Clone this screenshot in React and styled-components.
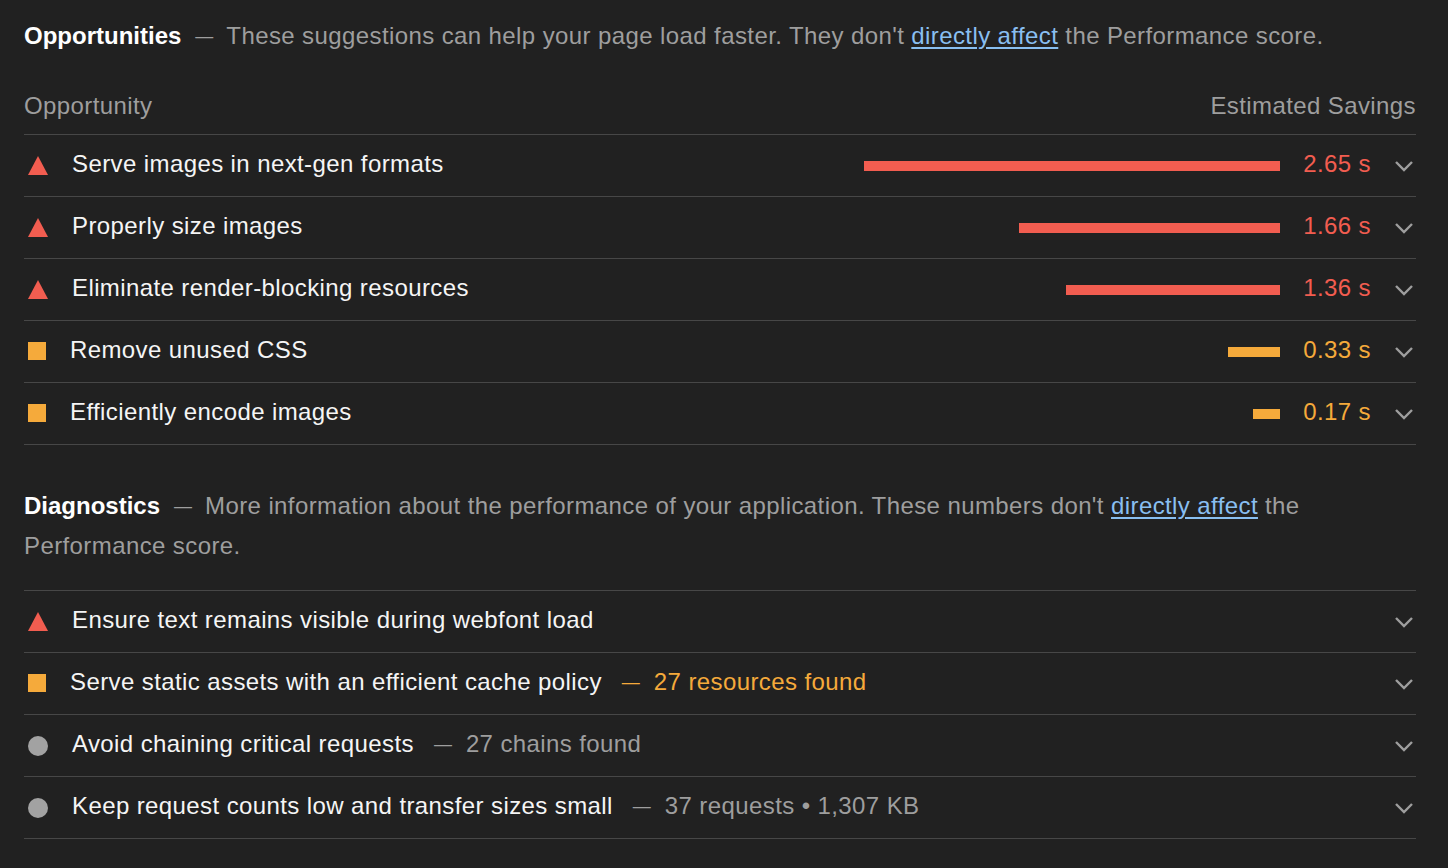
import React from "react";
import styled, { createGlobalStyle } from "styled-components";

const RED = "#f25d50";
const ORANGE = "#f5aa3b";
const GRAY = "#9e9e9e";
const LINE = "#474747";

const Global = createGlobalStyle`
  html, body { margin: 0; padding: 0; background: #212121; }
  body { font-family: "Liberation Sans", Arial, Helvetica, sans-serif; color: #f5f5f5; }
`;

const Page = styled.div`
  padding: 16px 32px 0 24px;
  font-size: 24px;
  letter-spacing: 0.4px;
`;

const Section = styled.section`
  & + & { margin-top: 41px; }
`;

const SectionHead = styled.div`
  line-height: 40px;
  color: ${GRAY};
  padding-bottom: ${(p) => (p.$table ? 0 : 24)}px;
  border-bottom: ${(p) => (p.$table ? "none" : `1px solid ${LINE}`)};
`;

const SectionTitle = styled.span`
  color: #fff;
  font-weight: 700;
  letter-spacing: 0;
`;

const Dash = styled.span`
  font-size: 18px;
  letter-spacing: 0;
  vertical-align: 2px;
  margin: ${(p) => p.$m};
`;

const Link = styled.a`
  color: #89bff1;
  text-decoration: underline;
  text-underline-offset: 3px;
`;

const TableHead = styled.div`
  display: flex;
  justify-content: space-between;
  padding: 30px 0 8px;
  line-height: 40px;
  color: ${GRAY};
  border-bottom: 1px solid ${LINE};
`;

const Row = styled.div`
  display: flex;
  align-items: center;
  height: 61px;
  border-bottom: 1px solid ${LINE};
`;

const IconBox = styled.div`
  display: flex;
  align-items: center;
  margin-left: 4px;
  margin-right: 24px;
`;

const Square = styled.div`
  width: 18px;
  height: 18px;
  margin-bottom: 2px;
  background: ${ORANGE};
`;

const Circle = styled.div`
  width: 20px;
  height: 20px;
  border-radius: 50%;
  background: #a2a2a2;
`;

const Title = styled.div`
  flex: 1;
  color: #f5f5f5;
  white-space: nowrap;
  padding-bottom: 3px;
`;

const DisplayValue = styled.span`
  margin-left: 20px;
  color: ${(p) => p.$color};
`;

const Bar = styled.div`
  height: 10px;
  background: ${(p) => p.$color};
`;

const Value = styled.div`
  width: 91px;
  text-align: right;
  padding-bottom: 3px;
  color: ${(p) => p.$color};
`;

const Chevron = styled.div`
  width: 45px;
  display: flex;
  justify-content: flex-end;
  padding-right: 2px;
  box-sizing: border-box;
`;

const Triangle = () => (
  <svg width="20" height="19" viewBox="0 0 20 19">
    <polygon points="10,0 20,19 0,19" fill={RED} />
  </svg>
);

const ChevronIcon = () => (
  <svg width="20" height="12" viewBox="0 0 20 12">
    <polyline points="2,2 10,10 18,2" fill="none" stroke={GRAY} strokeWidth="2.4" />
  </svg>
);

const Icon = ({ kind }) => (
  <IconBox>
    {kind === "fail" ? <Triangle /> : kind === "avg" ? <Square /> : <Circle />}
  </IconBox>
);

const opportunities = [
  { kind: "fail", title: "Serve images in next-gen formats", v: 2.65 },
  { kind: "fail", title: "Properly size images", v: 1.66 },
  { kind: "fail", title: "Eliminate render-blocking resources", v: 1.36 },
  { kind: "avg", title: "Remove unused CSS", v: 0.33 },
  { kind: "avg", title: "Efficiently encode images", v: 0.17 },
];

const diagnostics = [
  { kind: "fail", title: "Ensure text remains visible during webfont load" },
  { kind: "avg", title: "Serve static assets with an efficient cache policy", extra: "27 resources found" },
  { kind: "info", title: "Avoid chaining critical requests", extra: "27 chains found" },
  { kind: "info", title: "Keep request counts low and transfer sizes small", extra: "37 requests • 1,307 KB" },
];

export default function App() {
  return (
    <Page>
      <Global />
      <Section>
        <SectionHead $table>
          <SectionTitle>Opportunities</SectionTitle>
          <Dash $m="0 13px 0 14px">—</Dash>
          These suggestions can help your page load faster. They don't{" "}
          <Link>directly affect</Link> the Performance score.
        </SectionHead>
        <TableHead>
          <span>Opportunity</span>
          <span>Estimated Savings</span>
        </TableHead>
        {opportunities.map((o) => {
          const c = o.kind === "fail" ? RED : ORANGE;
          return (
            <Row key={o.title}>
              <Icon kind={o.kind} />
              <Title>{o.title}</Title>
              <Bar $color={c} style={{ width: `${Math.round(o.v * 157)}px` }} />
              <Value $color={c}>{o.v.toFixed(2)} s</Value>
              <Chevron>
                <ChevronIcon />
              </Chevron>
            </Row>
          );
        })}
      </Section>
      <Section>
        <SectionHead>
          <SectionTitle>Diagnostics</SectionTitle>
          <Dash $m="0 13px 0 14px">—</Dash>
          More information about the performance of your application. These numbers don't{" "}
          <Link>directly affect</Link> the Performance score.
        </SectionHead>
        {diagnostics.map((d) => (
          <Row key={d.title}>
            <Icon kind={d.kind} />
            <Title>
              {d.title}
              {d.extra && (
                <DisplayValue $color={d.kind === "avg" ? ORANGE : GRAY}>
                  <Dash $m="0 14px 0 0">—</Dash>
                  {d.extra}
                </DisplayValue>
              )}
            </Title>
            <Chevron>
              <ChevronIcon />
            </Chevron>
          </Row>
        ))}
      </Section>
    </Page>
  );
}
